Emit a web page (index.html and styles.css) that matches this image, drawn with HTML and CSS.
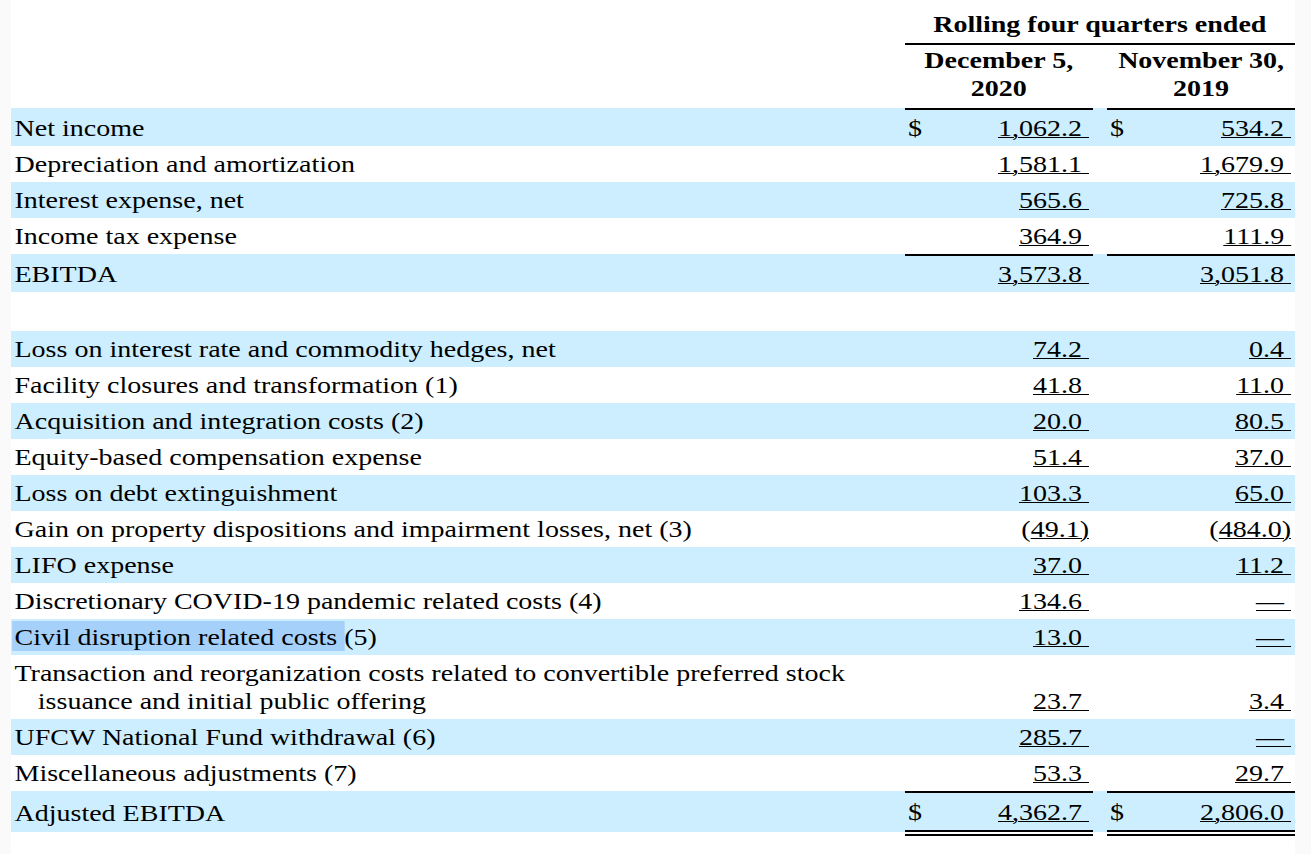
FILE: index.html
```html
<!DOCTYPE html>
<html lang="en">
<head>
<meta charset="utf-8">
<title>Adjusted EBITDA</title>
<link rel="stylesheet" href="styles.css">
</head>
<body>
<div class="sheet">
  <div class="row head1"><div></div><div class="title"><span class="txt">Rolling four quarters ended</span></div></div>
  <div class="row head2"><div></div><div class="colh"><span class="txt">December 5,<br>2020</span></div><div></div><div class="colh"><span class="txt">November 30,<br>2019</span></div></div>

  <div class="row band ruled"><div class="label">Net income</div><div class="num"><span class="cur">$</span><span class="amt"><u>1,062.2&nbsp;</u></span></div><div class="gap"></div><div class="num"><span class="cur">$</span><span class="amt"><u>534.2&nbsp;</u></span></div></div>
  <div class="row"><div class="label">Depreciation and amortization</div><div class="num"><span class="amt"><u>1,581.1&nbsp;</u></span></div><div class="gap"></div><div class="num"><span class="amt"><u>1,679.9&nbsp;</u></span></div></div>
  <div class="row band"><div class="label">Interest expense, net</div><div class="num"><span class="amt"><u>565.6&nbsp;</u></span></div><div class="gap"></div><div class="num"><span class="amt"><u>725.8&nbsp;</u></span></div></div>
  <div class="row"><div class="label">Income tax expense</div><div class="num"><span class="amt"><u>364.9&nbsp;</u></span></div><div class="gap"></div><div class="num"><span class="amt"><u>111.9&nbsp;</u></span></div></div>
  <div class="row band ruled"><div class="label">EBITDA</div><div class="num"><span class="amt"><u>3,573.8&nbsp;</u></span></div><div class="gap"></div><div class="num"><span class="amt"><u>3,051.8&nbsp;</u></span></div></div>

  <div class="row blank"></div>

  <div class="row band"><div class="label">Loss on interest rate and commodity hedges, net</div><div class="num"><span class="amt"><u>74.2&nbsp;</u></span></div><div class="gap"></div><div class="num"><span class="amt"><u>0.4&nbsp;</u></span></div></div>
  <div class="row"><div class="label">Facility closures and transformation (1)</div><div class="num"><span class="amt"><u>41.8&nbsp;</u></span></div><div class="gap"></div><div class="num"><span class="amt"><u>11.0&nbsp;</u></span></div></div>
  <div class="row band"><div class="label">Acquisition and integration costs (2)</div><div class="num"><span class="amt"><u>20.0&nbsp;</u></span></div><div class="gap"></div><div class="num"><span class="amt"><u>80.5&nbsp;</u></span></div></div>
  <div class="row"><div class="label">Equity-based compensation expense</div><div class="num"><span class="amt"><u>51.4&nbsp;</u></span></div><div class="gap"></div><div class="num"><span class="amt"><u>37.0&nbsp;</u></span></div></div>
  <div class="row band"><div class="label">Loss on debt extinguishment</div><div class="num"><span class="amt"><u>103.3&nbsp;</u></span></div><div class="gap"></div><div class="num"><span class="amt"><u>65.0&nbsp;</u></span></div></div>
  <div class="row"><div class="label">Gain on property dispositions and impairment losses, net (3)</div><div class="num"><span class="amt">(<u>49.1)</u></span></div><div class="gap"></div><div class="num"><span class="amt">(<u>484.0)</u></span></div></div>
  <div class="row band"><div class="label">LIFO expense</div><div class="num"><span class="amt"><u>37.0&nbsp;</u></span></div><div class="gap"></div><div class="num"><span class="amt"><u>11.2&nbsp;</u></span></div></div>
  <div class="row"><div class="label">Discretionary COVID-19 pandemic related costs (4)</div><div class="num"><span class="amt"><u>134.6&nbsp;</u></span></div><div class="gap"></div><div class="num"><span class="amt"><u>—&nbsp;</u></span></div></div>
  <div class="row band"><div class="label"><span class="sel">Civil disruption related costs </span>(5)</div><div class="num"><span class="amt"><u>13.0&nbsp;</u></span></div><div class="gap"></div><div class="num"><span class="amt"><u>—&nbsp;</u></span></div></div>
  <div class="row"><div class="label hang">Transaction and reorganization costs related to convertible preferred stock issuance and initial public offering</div><div class="num"><span class="amt"><u>23.7&nbsp;</u></span></div><div class="gap"></div><div class="num"><span class="amt"><u>3.4&nbsp;</u></span></div></div>
  <div class="row band"><div class="label">UFCW National Fund withdrawal (6)</div><div class="num"><span class="amt"><u>285.7&nbsp;</u></span></div><div class="gap"></div><div class="num"><span class="amt"><u>—&nbsp;</u></span></div></div>
  <div class="row"><div class="label">Miscellaneous adjustments (7)</div><div class="num"><span class="amt"><u>53.3&nbsp;</u></span></div><div class="gap"></div><div class="num"><span class="amt"><u>29.7&nbsp;</u></span></div></div>
  <div class="row band total"><div class="label">Adjusted EBITDA</div><div class="num"><span class="cur">$</span><span class="amt"><u>4,362.7&nbsp;</u></span></div><div class="gap"></div><div class="num"><span class="cur">$</span><span class="amt"><u>2,806.0&nbsp;</u></span></div></div>
</div>
</body>
</html>
```

FILE: styles.css
```css
:root {
  --wide: 1.1667;
}

html, body {
  margin: 0;
  padding: 0;
}

body {
  background: #fafafa;
  font-family: "Liberation Serif", "Times New Roman", serif;
  font-size: 24px;
  color: #000;
}

.sheet {
  margin-left: 11px;
  width: 1284px;
  min-height: 854px;
  background: #fff;
}

.row {
  display: grid;
  grid-template-columns: 894px 188px 14px 188px;
  line-height: 28px;
}

.band {
  background: #cceeff;
}

/* the statement's typeface is set wide */
.txt,
.cur,
.amt {
  display: inline-block;
  transform: scaleX(var(--wide));
}

.txt {
  transform-origin: center;
}

.cur {
  transform-origin: left center;
}

.amt {
  margin-left: auto;
  transform-origin: right center;
}

.head1 .title {
  grid-column: 2 / 5;
  text-align: center;
  font-weight: bold;
  padding: 10px 0 5px;
  border-bottom: 2px solid #000;
}

.head2 .colh {
  text-align: center;
  font-weight: bold;
  padding: 1px 0 6px;
}

.label {
  box-sizing: border-box;
  width: 766px;
  padding: 4px 3px;
  transform: scaleX(var(--wide));
  transform-origin: left center;
}

.label.hang {
  padding-left: 23px;
  text-indent: -20px;
}

.num {
  display: flex;
  align-items: flex-end;
  padding: 4px 4px 4px 3px;
}

u {
  text-decoration-thickness: 1px;
}

.ruled > * {
  border-top: 2px solid transparent;
}

.ruled > .num {
  border-top-color: #000;
}

.blank {
  height: 39px;
}

.sel {
  background: #a4d0f9;
  padding: 3px 0 1px 2px;
  margin-left: -2px;
}

.total {
  grid-template-rows: 41px;
}

.total > .label {
  border-top: 2px solid transparent;
  padding: 6px 3px 0;
}

.total > .num {
  box-sizing: border-box;
  height: 45px;
  border-top: 2px solid #000;
  border-bottom: 6px double #000;
  padding: 5px 4px 4px 3px;
}
```
